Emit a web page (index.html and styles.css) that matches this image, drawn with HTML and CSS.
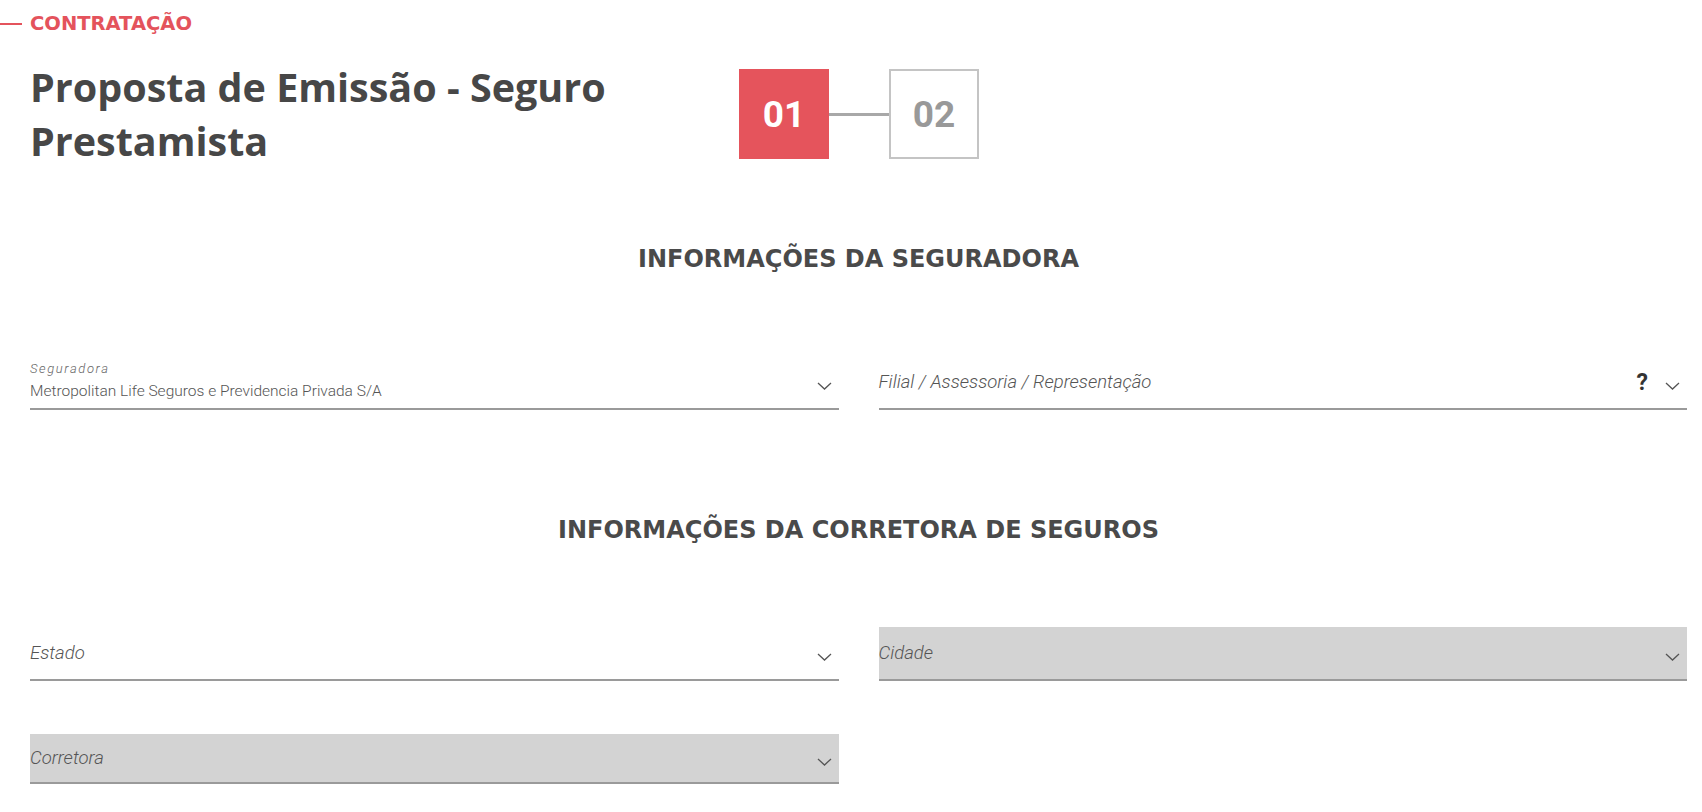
FILE: index.html
```html
<!DOCTYPE html>
<html lang="pt-BR">
<head>
    <meta charset="UTF-8">
    <meta name="viewport" content="width=device-width, initial-scale=1.0">
    <title>Proposta de Emissão - Seguro Prestamista</title>
    <link rel="stylesheet" href="styles.css">
</head>
<body>
    <header class="page-head">
        <div class="eyebrow"><span class="eyebrow-line"></span>CONTRATAÇÃO</div>
        <div class="head-row">
            <h1 class="title">Proposta de Emissão - Seguro Prestamista</h1>
            <ol class="steps">
                <li class="step step-active">01</li>
                <li class="step-link"></li>
                <li class="step">02</li>
            </ol>
        </div>
    </header>

    <main class="form">
        <h2 class="section-title">INFORMAÇÕES DA SEGURADORA</h2>
        <div class="row">
            <div class="field">
                <div class="field-text">
                    <span class="field-label">Seguradora</span>
                    <span class="field-value">Metropolitan Life Seguros e Previdencia Privada S/A</span>
                </div>
                <svg class="chevron" viewBox="0 0 15 8"><path d="M1 1l6.5 6 6.5-6"/></svg>
            </div>
            <div class="field">
                <span class="field-placeholder">Filial / Assessoria / Representação</span>
                <span class="help">?</span>
                <svg class="chevron" viewBox="0 0 15 8"><path d="M1 1l6.5 6 6.5-6"/></svg>
            </div>
        </div>

        <h2 class="section-title section-second">INFORMAÇÕES DA CORRETORA DE SEGUROS</h2>
        <div class="row">
            <div class="field">
                <span class="field-placeholder">Estado</span>
                <svg class="chevron" viewBox="0 0 15 8"><path d="M1 1l6.5 6 6.5-6"/></svg>
            </div>
            <div class="field field-disabled">
                <span class="field-placeholder">Cidade</span>
                <svg class="chevron" viewBox="0 0 15 8"><path d="M1 1l6.5 6 6.5-6"/></svg>
            </div>
        </div>
        <div class="row row-next">
            <div class="field field-disabled field-short">
                <span class="field-placeholder">Corretora</span>
                <svg class="chevron" viewBox="0 0 15 8"><path d="M1 1l6.5 6 6.5-6"/></svg>
            </div>
        </div>
    </main>
</body>
</html>
```

FILE: styles.css
```css
body {
    font-family: Roboto, "Liberation Sans", sans-serif;
    margin: 0;
    padding: 0;
    background-color: #fff;
    color: #4a4a4a;
}

.eyebrow {
    display: flex;
    align-items: center;
    gap: 8px;
    padding-top: 14px;
    font-family: "DejaVu Sans", sans-serif;
    font-size: 19.5px;
    line-height: 20px;
    font-weight: 700;
    color: #e4535c;
}

.eyebrow-line {
    width: 22px;
    height: 2px;
    background: #e4535c;
}

.head-row {
    display: flex;
    align-items: center;
    margin-top: 26px;
    padding-left: 30px;
}

.title {
    flex: 0 0 640px;
    margin: 0 69px 0 0;
    font-family: "Open Sans", Roboto, sans-serif;
    font-size: 39.5px;
    line-height: 54px;
    font-weight: 700;
    color: #474747;
}

.steps {
    display: flex;
    align-items: center;
    list-style: none;
    margin: 0;
    padding: 0;
}

.step {
    width: 86px;
    height: 86px;
    display: flex;
    align-items: center;
    justify-content: center;
    border: 2px solid #c4c4c4;
    font-size: 37px;
    font-weight: 700;
    color: #999;
}

.step-active {
    background: #e5545c;
    border-color: #e5545c;
    color: #fff;
}

.step-link {
    width: 60px;
    height: 3px;
    background: #a8a8a8;
}

.form {
    padding: 0 15px 0 30px;
}

.section-title {
    margin: 77px 0 0;
    text-align: center;
    font-family: "DejaVu Sans", sans-serif;
    font-size: 24px;
    line-height: 28px;
    font-weight: 700;
    color: #4a4a4a;
}

.section-second {
    margin-top: 106px;
}

.row {
    display: grid;
    grid-template-columns: 1fr 1fr;
    gap: 40px;
    margin-top: 83px;
}

.row-next {
    margin-top: 53px;
}

.field {
    display: flex;
    align-items: center;
    height: 52px;
    border-bottom: 2px solid #9a9a9a;
    color: #555;
}

.field-short {
    height: 48px;
}

.field-disabled {
    background: #d3d3d3;
}

.field-text {
    display: flex;
    flex-direction: column;
    flex: 1;
}

.field-label {
    font-size: 13px;
    line-height: 18px;
    font-style: italic;
    font-weight: 300;
    letter-spacing: 1.6px;
    color: #666;
}

.field-value {
    font-size: 15.5px;
    line-height: 26px;
    font-weight: 300;
    color: #555;
}

.field-placeholder {
    flex: 1;
    font-size: 18.5px;
    font-style: italic;
    font-weight: 300;
    color: #555;
}

.help {
    font-size: 23px;
    font-weight: 700;
    color: #333;
    margin-right: 17px;
}

.chevron {
    width: 15px;
    height: 8px;
    margin: 8px 7px 0 0;
    fill: none;
    stroke: #555;
    stroke-width: 1.3;
}
```
